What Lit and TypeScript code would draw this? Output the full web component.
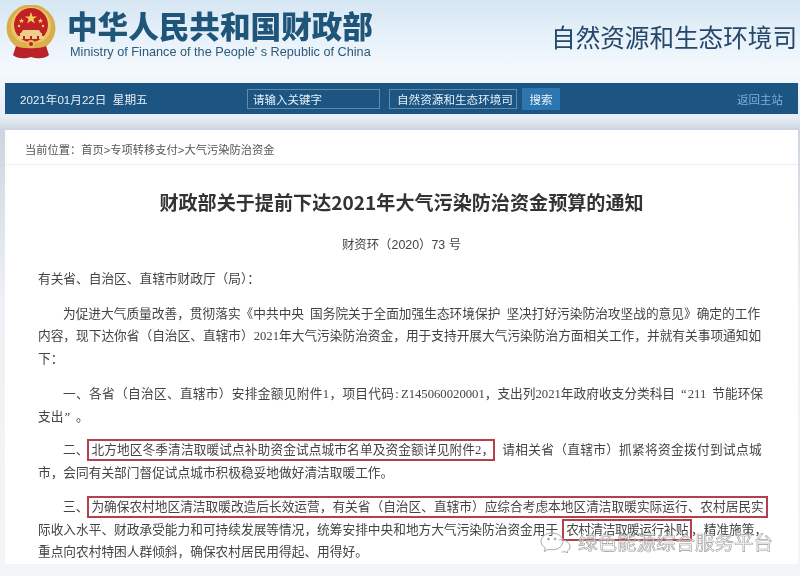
import { LitElement, html, css } from "lit";
import { customElement } from "lit/decorators.js";

@customElement("app-root")
export class AppRoot extends LitElement {
  static styles = css`
    :host { display: block; width: 800px; height: 576px; overflow: hidden; font-family: "Liberation Sans", "Noto Sans CJK SC", sans-serif; }
    .page { position: relative; width: 800px; height: 576px; overflow: hidden; filter: blur(0.4px);
      background: linear-gradient(180deg, #d6e6f3 0, #e8f2fa 40px, #f5f9fd 72px, #e6edf4 118px, #ccd5e0 130px, #eef1f5 300px, #f4f5f7 576px); display: flex; flex-direction: column; }
    .head { height: 83px; flex: none; display: flex; align-items: flex-start; padding: 5px 0 0 6px; box-sizing: border-box; }
    .emblem { width: 50px; height: 54px; flex: none; }
    .brand { margin: 5px 0 0 11px; display: flex; flex-direction: column; width: 320px; }
    .cn { font-family: "Noto Sans CJK SC", sans-serif; font-weight: 900; font-size: 30.6px; line-height: 30px; color: #1f5578; white-space: nowrap; }
    .en { font-size: 12.7px; line-height: 16px; margin-top: 4px; color: #2a5a7c; white-space: nowrap; margin-left: 3px; }
    .dept { margin: 13px 0 0 auto; padding-right: 3px; font-family: "Noto Sans CJK SC", sans-serif; font-size: 24.6px; line-height: 36px; color: #24476a; white-space: nowrap; }
    .bar { flex: none; margin: 0 2px 0 5px; height: 31px; background: #1c5582; color: #e8f0f6; display: flex; align-items: center; font-size: 11.6px; box-sizing: border-box; padding-left: 15px; }
    .date { width: 227px; flex: none; white-space: nowrap; }
    .field { height: 20px; box-sizing: border-box; border: 1px solid #5c8db0; display: flex; align-items: center; padding-left: 5px; font-size: 11.5px; white-space: nowrap; }
    .f1 { width: 133px; }
    .f2 { width: 128px; margin-left: 9px; padding-left: 7px; font-size: 11.6px; }
    .btn { margin-left: 5px; width: 38px; height: 22px; background: #2b76b0; display: flex; align-items: center; justify-content: center; font-size: 11.5px; }
    .back { margin-left: auto; margin-right: 15px; color: #7db0d4; font-size: 11.5px; }
    .card { flex: none; margin: 16px 2px 0 5px; height: 434px; background: #fff; box-sizing: border-box; position: relative; color: #444; }
    .crumb { height: 30px; padding: 4px 0 0 20px; border-bottom: 1px solid #eceef0; display: flex; align-items: center; font-size: 11.25px; color: #555; white-space: nowrap; }
    .title { margin: 23px 0 0; text-align: center; font-family: "Noto Sans CJK SC", sans-serif; font-weight: 700; font-size: 19.1px; line-height: 28px; color: #333; }
    .doc { margin: 19px 0 0; text-align: center; font-size: 12.4px; line-height: 20px; }
    .body { padding: 0 10px 0 33px; font-family: "Liberation Serif", "Noto Sans CJK SC", serif; font-size: 12.7px; line-height: 22.5px; white-space: nowrap; }
    .body p { margin: 12px 0 0; }
    .body p.first { margin-top: 13px; }
    .body p.m13 { margin-top: 13px; }
    .body p.m11 { margin-top: 11px; }
    .ind { text-indent: 25px; }
    .box { outline: 2px solid #b5404c; outline-offset: -1px; padding: 3px 3px; }
    .wide { letter-spacing: 0.1px; padding-right: 0; margin-right: 8px; }
    .tight { letter-spacing: -0.5px; margin-left: 5px; }
    .loose { letter-spacing: 0.3px; }
    .colon { margin-left: 1px; margin-right: 2px; }
    .q { display: inline-block; width: 12.7px; text-indent: 0; }
    .ql { text-align: left; padding-left: 1px; box-sizing: border-box; }
    .qr { text-align: right; padding-right: 1px; box-sizing: border-box; }
    .gap { display: inline-block; width: 6px; text-indent: 0; }
    .mark { position: absolute; left: 535px; top: 398px; display: flex; align-items: center; gap: 1px; font-family: "Noto Sans CJK SC", sans-serif; font-size: 19.5px; line-height: 28px; color: rgba(255,255,255,.55); -webkit-text-stroke: 0.6px #9a9a9a; white-space: nowrap; }
    .mark svg { width: 37px; height: 22px; flex: none; }
  `;

  render() {
    return html`<div class="page">
      <div class="head">
        <svg class="emblem" viewBox="0 0 50 54">
          <ellipse cx="25" cy="23" rx="24.5" ry="23.5" fill="#d9ae4a"/>
          <ellipse cx="25" cy="21" rx="20" ry="19" fill="#e8c565"/>
          <circle cx="25" cy="20" r="17" fill="#c02026"/>
          <path d="M25 7l1.500 4.400h4.600l-3.700 2.700 1.400 4.400-3.800-2.700-3.800 2.700 1.400-4.400-3.700-2.700h4.600z" fill="#f2cf5b"/>
          <path d="M15.500 13l.7 2h2l-1.600 1.200.6 2-1.700-1.200-1.700 1.200.6-2-1.600-1.200h2zM34.500 13l.7 2h2l-1.600 1.200.6 2-1.700-1.200-1.700 1.200.6-2-1.600-1.200h2z" fill="#f2cf5b"/>
          <circle cx="13" cy="21" r="1.200" fill="#f2cf5b"/><circle cx="37" cy="21" r="1.200" fill="#f2cf5b"/>
          <path d="M17 25h16l2 3H15zM14 28h22v3H14zM12 31h26v3H12z" fill="#ecd08a"/>
          <path d="M17 31h2v3h-2zM24 31h2v3h-2zM31 31h2v3h-2z" fill="#c02026"/>
          <path d="M7 34c5 5 31 5 36 0l-2 7c-4 3-28 3-32 0z" fill="#dcb04f"/>
          <path d="M10 41c4 3 26 3 30 0l3 9c-4 4-12 4-18 2-6 2-14 2-18-2z" fill="#b92226"/>
          <circle cx="25" cy="39" r="4" fill="#e4bd5b"/>
          <circle cx="25" cy="39" r="2" fill="#c02026"/>
        </svg>
        <div class="brand">
          <div class="cn">中华人民共和国财政部</div>
          <div class="en">Ministry of Finance of the People' s Republic of China</div>
        </div>
        <div class="dept">自然资源和生态环境司</div>
      </div>
      <div class="bar">
        <div class="date">2021年01月22日&nbsp;&nbsp;星期五</div>
        <div class="field f1">请输入关键字</div>
        <div class="field f2">自然资源和生态环境司</div>
        <div class="btn">搜索</div>
        <div class="back">返回主站</div>
      </div>
      <div class="card">
        <div class="crumb">当前位置：首页&gt;专项转移支付&gt;大气污染防治资金</div>
        <div class="title">财政部关于提前下达2021年大气污染防治资金预算的通知</div>
        <div class="doc">财资环（2020）73 号</div>
        <div class="body">
          <p class="first">有关省、自治区、直辖市财政厅（局）：</p>
          <p class="ind">为促进大气质量改善，贯彻落实《中共中央<span class="gap"></span>国务院关于全面加强生态环境保护<span class="gap"></span>坚决打好污染防治攻坚战的意见》确定的工作<br>内容，现下达你省（自治区、直辖市）2021年大气污染防治资金，用于支持开展大气污染防治方面相关工作，并就有关事项通知如<br>下：</p>
          <p class="ind m13"><span class="loose">一、各省（自治区、直辖市）安排金额见附件1，项目代码</span><span class="colon">:</span>Z145060020001，支出列2021年政府收支分类科目<span class="q qr">“</span>211<span class="gap"></span>节能环保<br>支出<span class="q ql">”</span>。</p>
          <p class="ind m11">二、<span class="box wide">北方地区冬季清洁取暖试点补助资金试点城市名单及资金额详见附件2，</span><span class="loose">请相关省（直辖市）抓紧将资金拨付到试点城</span><br>市，会同有关部门督促试点城市积极稳妥地做好清洁取暖工作。</p>
          <p class="ind">三、<span class="box">为确保农村地区清洁取暖改造后长效运营，有关省（自治区、直辖市）应综合考虑本地区清洁取暖实际运行、农村居民实</span><br>际收入水平、财政承受能力和可持续发展等情况，统筹安排中央和地方大气污染防治资金用于<span class="box tight">农村清洁取暖运行补贴</span>，精准施策，<br>重点向农村特困人群倾斜，确保农村居民用得起、用得好。</p>
        </div>
        <div class="mark">
          <svg viewBox="0 0 37 22" fill="none" stroke="#a8a8a8" stroke-width="1"><path d="M12 2c6 0 11 3.600 11 8.400s-5 8.400-11 8.400c-1.400 0-2.600-.2-3.800-.5L4.400 20.500l.9-3.700C2.700 15.200 1 12.900 1 10.400 1 5.600 6 2 12 2z"/><path d="M19 9c5-1 11 2 11 6.500 0 2-1.200 3.700-3 5l.6 1.500-2.800-1.400c-1 .3-2 .4-3.100.4"/><circle cx="8.500" cy="8" r=".9" fill="#a8a8a8"/><circle cx="15" cy="8" r=".9" fill="#a8a8a8"/></svg>
          <span>绿色能源综合服务平台</span>
        </div>
      </div>
    </div>`;
  }
}
